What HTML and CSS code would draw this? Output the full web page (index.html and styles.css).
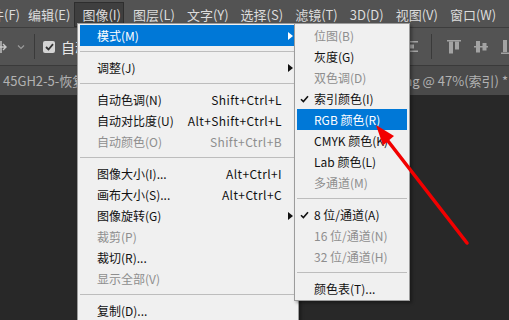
FILE: index.html
```html
<!DOCTYPE html>
<html lang="zh-CN">
<head>
    <meta charset="UTF-8">
    <meta name="viewport" content="width=device-width, initial-scale=1.0">
    <title>图像 - 模式</title>
    <link rel="stylesheet" href="styles.css">
</head>
<body>
    <div class="menubar">
        <span class="top-item first">文件(F)</span>
        <span class="top-item">编辑(E)</span>
        <span class="top-item open">图像(I)</span>
        <span class="top-item">图层(L)</span>
        <span class="top-item">文字(Y)</span>
        <span class="top-item">选择(S)</span>
        <span class="top-item">滤镜(T)</span>
        <span class="top-item">3D(D)</span>
        <span class="top-item">视图(V)</span>
        <span class="top-item">窗口(W)</span>
    </div>

    <div class="toolbar">
        <div class="tool-left">
            <svg class="move-icon" width="12" height="14" viewBox="0 0 12 14">
                <path d="M0 7 H10 M7 4 L10 7 L7 10 M5 1 V13" stroke="#c8c8c8" stroke-width="1.4" fill="none"/>
            </svg>
            <svg class="chevron" width="8" height="6" viewBox="0 0 8 6">
                <path d="M1 1.5 L4 4.5 L7 1.5" stroke="#9a9a9a" stroke-width="1.2" fill="none"/>
            </svg>
            <span class="tool-sep"></span>
            <span class="checkbox">
                <svg width="9" height="8" viewBox="0 0 9 8">
                    <path d="M1 4 L3.5 6.5 L8 1.2" stroke="#333" stroke-width="1.8" fill="none"/>
                </svg>
            </span>
            <span class="auto-label">自动</span>
        </div>
        <div class="tool-right">
            <svg width="12" height="12" viewBox="0 0 12 12">
                <rect x="0" y="0" width="12" height="1.5" fill="#a3a3a3"/>
                <rect x="0" y="3.5" width="8" height="4" fill="#a3a3a3"/>
                <rect x="0" y="9.5" width="12" height="1.5" fill="#a3a3a3"/>
            </svg>
            <span class="tool-sep"></span>
            <svg width="15" height="14" viewBox="0 0 15 14">
                <rect x="0" y="0" width="14" height="1.5" fill="#a3a3a3"/>
                <rect x="2" y="1.5" width="4" height="12" fill="#a3a3a3"/>
                <rect x="8" y="1.5" width="4" height="8" fill="#a3a3a3"/>
            </svg>
            <svg width="15" height="14" viewBox="0 0 15 14">
                <rect x="0" y="6" width="14" height="1.5" fill="#a3a3a3"/>
                <rect x="2" y="1" width="4" height="11.5" fill="#a3a3a3"/>
                <rect x="8.5" y="3" width="4" height="7.5" fill="#a3a3a3"/>
            </svg>
            <svg width="12" height="14" viewBox="0 0 12 14">
                <rect x="2" y="0" width="4" height="12" fill="#a3a3a3"/>
                <rect x="8" y="4" width="4" height="8" fill="#a3a3a3"/>
                <rect x="0" y="12.5" width="12" height="1.5" fill="#a3a3a3"/>
            </svg>
        </div>
    </div>

    <div class="tabs">
        <span class="tab-title">45GH2-5-恢复</span>
        <span class="tab-title">ong @ 47%(索引) *</span>
    </div>

    <div class="canvas"></div>

    <div class="menu main-menu">
        <div class="item active"><span class="check"></span><span class="label">模式(M)</span><span class="mark"><i class="arrow"></i></span></div>
        <div class="sep"></div>
        <div class="item"><span class="check"></span><span class="label">调整(J)</span><span class="mark"><i class="arrow"></i></span></div>
        <div class="sep"></div>
        <div class="item"><span class="check"></span><span class="label">自动色调(N)</span><span class="key">Shift+Ctrl+L</span><span class="mark"></span></div>
        <div class="item"><span class="check"></span><span class="label">自动对比度(U)</span><span class="key">Alt+Shift+Ctrl+L</span><span class="mark"></span></div>
        <div class="item off"><span class="check"></span><span class="label">自动颜色(O)</span><span class="key">Shift+Ctrl+B</span><span class="mark"></span></div>
        <div class="sep"></div>
        <div class="item"><span class="check"></span><span class="label">图像大小(I)...</span><span class="key">Alt+Ctrl+I</span><span class="mark"></span></div>
        <div class="item"><span class="check"></span><span class="label">画布大小(S)...</span><span class="key">Alt+Ctrl+C</span><span class="mark"></span></div>
        <div class="item"><span class="check"></span><span class="label">图像旋转(G)</span><span class="mark"><i class="arrow"></i></span></div>
        <div class="item off"><span class="check"></span><span class="label">裁剪(P)</span><span class="mark"></span></div>
        <div class="item"><span class="check"></span><span class="label">裁切(R)...</span><span class="mark"></span></div>
        <div class="item off"><span class="check"></span><span class="label">显示全部(V)</span><span class="mark"></span></div>
        <div class="sep"></div>
        <div class="item"><span class="check"></span><span class="label">复制(D)...</span><span class="mark"></span></div>
    </div>

    <div class="menu sub-menu">
        <div class="item off"><span class="check"></span><span class="label">位图(B)</span></div>
        <div class="item"><span class="check"></span><span class="label">灰度(G)</span></div>
        <div class="item off"><span class="check"></span><span class="label">双色调(D)</span></div>
        <div class="item"><span class="check"><svg width="9" height="8" viewBox="0 0 9 8"><path d="M1 4.2 L3.4 6.6 L8 1.2" stroke="#111" stroke-width="1.6" fill="none"/></svg></span><span class="label">索引颜色(I)</span></div>
        <div class="item active"><span class="check"></span><span class="label">RGB 颜色(R)</span></div>
        <div class="item"><span class="check"></span><span class="label">CMYK 颜色(K)</span></div>
        <div class="item"><span class="check"></span><span class="label">Lab 颜色(L)</span></div>
        <div class="item off"><span class="check"></span><span class="label">多通道(M)</span></div>
        <div class="sep"></div>
        <div class="item"><span class="check"><svg width="9" height="8" viewBox="0 0 9 8"><path d="M1 4.2 L3.4 6.6 L8 1.2" stroke="#111" stroke-width="1.6" fill="none"/></svg></span><span class="label">8 位/通道(A)</span></div>
        <div class="item off"><span class="check"></span><span class="label">16 位/通道(N)</span></div>
        <div class="item off"><span class="check"></span><span class="label">32 位/通道(H)</span></div>
        <div class="sep"></div>
        <div class="item"><span class="check"></span><span class="label">颜色表(T)...</span></div>
    </div>

    <!-- red annotation arrow pointing at RGB -->
    <svg class="pointer" width="509" height="320" viewBox="0 0 509 320">
        <line x1="467" y1="243" x2="388" y2="141" stroke="#f20000" stroke-width="3.5" stroke-linecap="round"/>
        <polygon points="376,125 394,136 383,145.5" fill="#f20000"/>
    </svg>
</body>
</html>
```

FILE: styles.css
```css
body {
    margin: 0;
    width: 509px;
    height: 320px;
    overflow: hidden;
    background: #282828;
    font-family: "Noto Sans CJK SC", "Noto Sans", sans-serif;
    display: flex;
    flex-direction: column;
}
.menubar {
    height: 27px;
    background: #535353;
    display: flex;
    align-items: center;
    gap: 12px;
    padding-top: 1px;
    box-sizing: border-box;
    font-size: 13px;
    color: #dcdcdc;
    white-space: nowrap;
    overflow: hidden;
}
.top-item {
    padding: 2px 0;
}
.top-item.first {
    margin-left: -22px;
    margin-right: -4px;
}
.top-item.open {
    background: #3f3f3f;
    border: 1px solid #2e2e2e;
    padding: 2px 2px 2px 7px;
    margin: 0 -3px 0 -8px;
}
.toolbar {
    height: 37px;
    background: #535353;
    border-top: 1px solid #3d3d3d;
    display: flex;
    align-items: center;
    justify-content: space-between;
}
.tool-left, .tool-right {
    display: flex;
    align-items: center;
}
.move-icon {
    margin-left: -4px;
}
.chevron {
    margin-left: 9px;
}
.tool-sep {
    width: 1px;
    height: 25px;
    background: #3a3a3a;
    margin: 0 8px 0 9px;
}
.checkbox {
    width: 12px;
    height: 12px;
    background: #d4d4d4;
    border-radius: 2px;
    display: flex;
    align-items: center;
    justify-content: center;
}
.auto-label {
    margin-left: 6px;
    font-size: 14px;
    color: #e8e8e8;
}
.tool-right {
    gap: 12px;
    margin-right: -4px;
}
.tool-right .tool-sep {
    margin: 0 3px 0 1px;
}
.tabs {
    height: 29px;
    background: #4a4a4a;
    border-top: 1px solid #3a3a3a;
    display: flex;
    align-items: center;
    justify-content: space-between;
    padding: 0 1px 0 3px;
    font-size: 13px;
    color: #b2b2b2;
    white-space: nowrap;
    overflow: hidden;
}
.canvas {
    flex: 1;
    background: #282828;
}
.menu {
    position: absolute;
    top: 23px;
    background: #f0f0f0;
    border: 1px solid #9c9c9c;
    padding: 1px 2px;
    font-size: 12px;
    color: #111;
    box-shadow: 2px 2px 3px rgba(0, 0, 0, 0.35);
}
.main-menu {
    left: 77px;
    width: 216px;
    height: 300px;
}
.sub-menu {
    left: 294px;
    width: 110px;
}
.item {
    height: 21px;
    display: flex;
    align-items: center;
    white-space: nowrap;
}
.item.off {
    color: #8e8e8e;
}
.item.active {
    background: #0078d7;
    color: #fff;
}
.check {
    width: 17px;
    flex-shrink: 0;
    display: flex;
    align-items: center;
    padding-left: 3px;
    box-sizing: border-box;
}
.label {
    flex: 1;
}
.key {
    letter-spacing: 0.4px;
}
.mark {
    width: 14px;
    flex-shrink: 0;
    display: flex;
    justify-content: flex-end;
    padding-right: 3px;
    box-sizing: border-box;
}
.arrow {
    width: 0;
    height: 0;
    border-left: 5px solid #111;
    border-top: 4.5px solid transparent;
    border-bottom: 4.5px solid transparent;
}
.item.active .arrow {
    border-left-color: #fff;
}
.sep {
    height: 1px;
    background: #bdbdbd;
    margin: 5px 0;
}
.pointer {
    position: absolute;
    left: 0;
    top: 0;
    pointer-events: none;
}
```
